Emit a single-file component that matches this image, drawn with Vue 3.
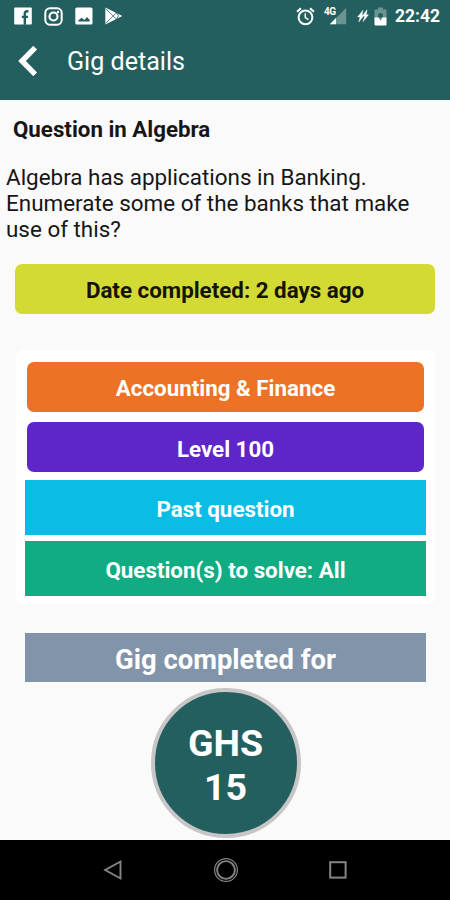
<template>
  <div class="screen">
    <header>
      <div class="status-bar">
        <div class="status-left">
          <svg width="18" height="18" viewBox="0 0 18 18">
            <rect x="0.200" y="0.400" width="17.600" height="17.200" rx="0.800" fill="#fff" />
            <path
              d="M14.500 4.300h-1.300q-2.400 0-2.400 2.400v11M7.800 9.900h6.200"
              fill="none"
              stroke="#235f5e"
              stroke-width="2.400"
            />
          </svg>
          <svg width="19" height="19" viewBox="0 0 19 19" fill="none" stroke="#fff">
            <rect x="1.300" y="1.300" width="16.400" height="16.400" rx="4.600" stroke-width="2" />
            <circle cx="9.500" cy="9.500" r="4" stroke-width="2.200" />
            <circle cx="14" cy="5" r="1.200" fill="#fff" stroke="none" />
          </svg>
          <svg width="18" height="18" viewBox="0 0 18 18">
            <rect x="0.300" y="0.400" width="17.200" height="17.200" rx="1.500" fill="#fff" />
            <path d="M3.300 14.500h11.400v-1.500l-2.700-3-2.500 3-3-2.200-3.200 2.800z" fill="#235f5e" />
          </svg>
          <svg width="19" height="18" viewBox="0 0 19 18">
            <path fill="#fff" d="M.3.400l17 8.500L.3 17.500z" />
            <path
              d="M.5 1.500l11 10.700M.5 16.500l11-10.700M11.500 5.800l2 3.100-2 3.300"
              fill="none"
              stroke="#235f5e"
              stroke-width="0.800"
            />
          </svg>
        </div>
        <div class="status-right">
          <svg class="alarm" width="19" height="19" viewBox="0 0 19 19" fill="none" stroke="#fff">
            <circle cx="9.500" cy="10.300" r="6.900" stroke-width="2" />
            <path d="M9.300 6.200v4.500l3.200 2" stroke-width="1.500" />
            <path d="M1 4.700L5 1.300M18 4.700L14 1.300" stroke-width="2.100" />
          </svg>
          <div class="network">
            <span>4G</span>
            <svg width="18" height="18" viewBox="0 0 18 18">
              <path d="M17.200.8v16.400H.8z" fill="#6b9391" />
              <path d="M7 11v6.200H.8z" fill="#fff" />
            </svg>
          </div>
          <svg class="bolts" width="12" height="14" viewBox="0 0 12 14">
            <path
              fill="#fff"
              d="M6 1.200L.5 8h2.600L1.800 13 7 6.300H5zM10 .8L5.400 7h2.400L6 12.700 11.500 5.700H9.300z"
              stroke="#fff"
              stroke-width="0.400"
            />
          </svg>
          <svg class="battery" width="13" height="19" viewBox="0 0 13 19">
            <path d="M4 .5h5v2h2.500q1 0 1 1v9H.5v-9q0-1 1-1H4z" fill="#6b9391" />
            <path d="M4.200 10.500V7.500q0-1.500 2.300-1.500t2.300 1.500v3z" fill="#235f5e" />
            <path d="M.5 10.500h4l2 3 2-3h4v7q0 1-1 1h-10q-1 0-1-1z" fill="#fff" />
          </svg>
          <span class="clock">22:42</span>
        </div>
      </div>
      <div class="app-bar">
        <svg width="20" height="30" viewBox="0 0 20 30">
          <path d="M17.200 1.700L4 15l13.200 13.300" fill="none" stroke="#fff" stroke-width="5.400" />
        </svg>
        <h1>Gig details</h1>
      </div>
    </header>

    <main>
      <h2>Question in Algebra</h2>
      <p class="question">
        Algebra has applications in Banking.<br />
        Enumerate some of the banks that make<br />
        use of this?
      </p>
      <div class="date">Date completed: 2 days ago</div>

      <div class="card">
        <div
          v-for="(tag, index) in tags"
          :key="index"
          class="tag"
          :class="[tag.color, tag.rounded ? 'rounded' : '']"
        >
          {{ tag.label }}
        </div>
      </div>

      <div class="completed">Gig completed for</div>
      <div class="amount">
        <span>GHS</span>
        <span>15</span>
      </div>
    </main>

    <nav>
      <svg width="20" height="22" viewBox="0 0 20 22">
        <path d="M17.500 2.500v17L2.200 11z" fill="none" stroke="#858585" stroke-width="1.900" />
      </svg>
      <svg width="26" height="26" viewBox="0 0 26 26" fill="none" stroke="#858585">
        <circle cx="13" cy="13" r="11.400" stroke-width="1.200" />
        <circle cx="13" cy="13" r="8.900" stroke-width="1.900" />
      </svg>
      <svg width="20" height="20" viewBox="0 0 20 20">
        <rect x="2.200" y="2.200" width="15.400" height="15.400" fill="none" stroke="#858585" stroke-width="2" />
      </svg>
    </nav>
  </div>
</template>

<script setup>
const tags = [
  { label: "Accounting & Finance", color: "orange", rounded: true },
  { label: "Level 100", color: "purple", rounded: true },
  { label: "Past question", color: "blue" },
  { label: "Question(s) to solve: All", color: "green" },
];
</script>

<style>
body {
  margin: 0;
}
</style>

<style scoped>
.screen {
  display: flex;
  flex-direction: column;
  width: 450px;
  height: 900px;
  overflow: hidden;
  background: #fafafa;
  color: #161616;
  font-family: Roboto, sans-serif;
}
svg {
  display: block;
  flex: none;
}
header {
  height: 100px;
  background: #235f5e;
  color: #fff;
}
.status-bar {
  display: flex;
  justify-content: space-between;
  height: 32px;
  padding: 0 10px 0 14px;
  align-items: center;
}
.status-left {
  display: flex;
  align-items: center;
  gap: 12px;
}
.status-right {
  display: flex;
  align-items: center;
}
.network {
  display: flex;
  margin-left: 9px;
}
.network span {
  width: 5px;
  font-size: 10px;
  font-weight: 700;
  line-height: 9px;
  letter-spacing: -0.4px;
}
.bolts {
  margin-left: 10px;
}
.battery {
  margin-left: 5px;
}
.clock {
  margin-left: 8px;
  font-size: 17.500px;
  font-weight: 700;
  line-height: 32px;
}
.app-bar {
  display: flex;
  align-items: center;
  height: 58px;
  padding-left: 18px;
}
h1 {
  margin: 1px 0 0 29px;
  font-size: 25.100px;
  font-weight: 400;
}
main {
  flex: 1;
  display: flex;
  flex-direction: column;
}
h2 {
  margin: 16px 0 0 13px;
  font-size: 22.300px;
  font-weight: 700;
  line-height: 26px;
}
.question {
  margin: 22px 0 0 6px;
  font-size: 22.430px;
  line-height: 26px;
  white-space: nowrap;
}
.date {
  height: 50px;
  margin: 22px 15px 0;
  border-radius: 7px;
  background: #d3da34;
  color: #141405;
  font-size: 22.350px;
  font-weight: 700;
  line-height: 53px;
  text-align: center;
}
.card {
  margin: 36px 15px 0 16px;
  padding: 12px 9px 8px;
  border-radius: 7px;
  background: #fff;
}
.tag {
  height: 55px;
  margin-bottom: 6px;
  color: #fff;
  font-size: 22.350px;
  font-weight: 700;
  line-height: 58px;
  text-align: center;
}
.tag:last-child {
  margin-bottom: 0;
}
.tag.rounded {
  height: 50px;
  margin: 0 2px 10px;
  border-radius: 7px;
  line-height: 53px;
}
.tag.purple {
  margin-bottom: 8px;
  line-height: 54px;
}
.orange {
  background: #ed7226;
}
.purple {
  background: #5e25c9;
}
.blue {
  background: #0bbce4;
}
.green {
  background: #12ac83;
}
.completed {
  height: 49px;
  margin: 29px 24px 0 25px;
  background: #8294a9;
  color: #fff;
  font-size: 27.400px;
  font-weight: 700;
  line-height: 54px;
  text-align: center;
}
.amount {
  box-sizing: border-box;
  display: flex;
  flex-direction: column;
  align-items: center;
  justify-content: center;
  align-self: center;
  width: 150px;
  height: 150px;
  margin-top: 6px;
  margin-left: 1px;
  padding-top: 4px;
  border: 4px solid #c7c5c6;
  border-radius: 50%;
  background: #235f5e;
  color: #fff;
  font-size: 37.500px;
  font-weight: 700;
  line-height: 44px;
}
nav {
  display: flex;
  align-items: center;
  justify-content: space-between;
  box-sizing: border-box;
  height: 60px;
  padding: 0 102px 0 103px;
  background: #000;
}
</style>
